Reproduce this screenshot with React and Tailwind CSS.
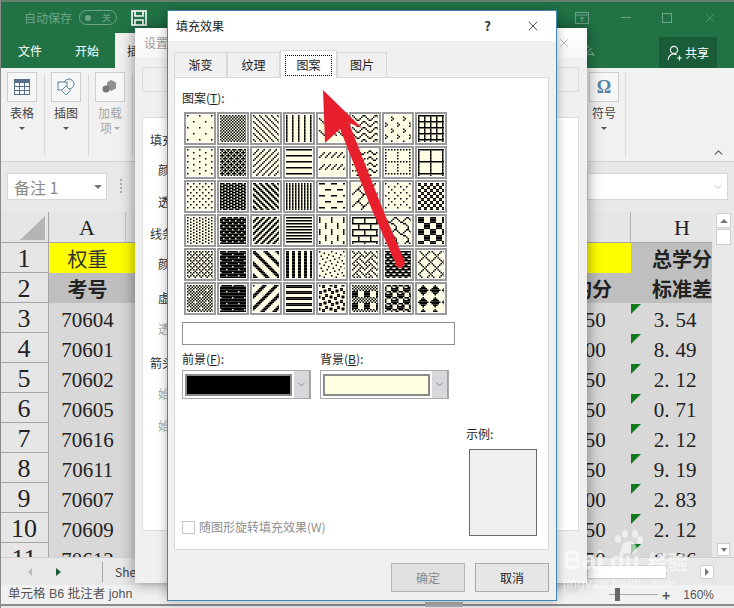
import { ChevronDown, ChevronUp, X } from 'lucide-react'

const CJK = "font-['Noto_Sans_CJK_SC','Liberation_Sans',sans-serif]"
const SERIF = "font-['Liberation_Serif','Noto_Sans_CJK_SC',serif]"

// 48 office fill patterns, 8x8 bitmaps as hex, row by row
const PATTERNS = [
  '8000000008000000', 'AA55AA55AA55AA55', '8844221188442211', '8888888888888888', '0000884422110000', '8142241881422418', '0008040800804080', 'FF888888FF888888',
  '8000080080000800', 'EE55BB55EE55BB55', '1122448811224488', 'FF000000FF000000', '0000112244880000', '0018A4030018A403', 'AA00800080008000', 'FF80808080808080',
  '8800220088002200', 'EEBBEEBBEEBBEEBB', 'CC663399CC663399', 'AAAAAAAAAAAAAAAA', 'F00000000F000000', '0102040818244281', '8000220008002200', 'CCCC3333CCCC3333',
  '8822882288228822', '77FFDDFF77FFDDFF', '3366CC993366CC99', 'FF00FF00FF00FF00', '8080808008080808', 'FF808080FF080808', '038448300C020101', 'F0F0F0F00F0F0F0F',
  'AA44AA11AA44AA11', 'F7FF7FFFF7FF7FFF', 'C1E070381C0E0783', 'CCCCCCCCCCCCCCCC', '8010024004200108', '8854224588142251', 'FF66FF99FF66FF99', '4122140814224180',
  'AA55AA51AA55AA15', '7FFFFFFFF7FFFFFF', '83070E1C3870E0C1', 'FFFF0000FFFF0000', 'B130031BD8C00C8D', 'AA55AA55F0F0F0F0', '77898F8F7798F8F8', '10387CFE7C381000',
]

const SHEET_ROWS = [
  ['70604', '50', '3.54'],
  ['70601', '00', '8.49'],
  ['70602', '50', '2.12'],
  ['70605', '50', '0.71'],
  ['70616', '50', '2.12'],
  ['70611', '50', '9.19'],
  ['70607', '00', '2.83'],
  ['70609', '50', '2.12'],
  ['70612', '50', '6.36'],
]

function Swatch({ bits, id }) {
  const rects = []
  for (let y = 0; y < 8; y++) {
    const row = parseInt(bits.slice(y * 2, y * 2 + 2), 16)
    let x = 0
    while (x < 8) {
      if (row & (0x80 >> x)) {
        let end = x
        while (end < 8 && row & (0x80 >> end)) end++
        rects.push(<rect key={x + '-' + y} x={x} y={y} width={end - x} height="1" fill="#000" />)
        x = end
      } else {
        x++
      }
    }
  }
  return (
    <div className="border-2 border-[#9a9a9a] bg-white p-px">
      <svg width="26" height="27" viewBox="0 0 17.33 18" className="block">
        <defs>
          <pattern id={id} width="8" height="8" patternUnits="userSpaceOnUse">
            <rect width="8" height="8" fill="#fffde4" />
            {rects}
          </pattern>
        </defs>
        <rect width="17.33" height="18" fill={`url(#${id})`} />
      </svg>
    </div>
  )
}

function RibbonButton({ label, muted, children, second }) {
  return (
    <div className="w-[44px] flex flex-col items-center pt-[4px] h-full">
      <div className="w-[30px] h-[30px] border border-[#cfcfcf] bg-[#f7f7f7] flex items-center justify-center">
        {children}
      </div>
      <div className={`mt-[3px] text-[12px] leading-[16px] text-center ${muted ? 'text-[#a6a6a6]' : 'text-[#444]'}`}>
        {label}
      </div>
      <div className="flex items-center gap-[2px] h-[14px]">
        {second && <span className="text-[12px] leading-[14px] text-[#a6a6a6]">{second}</span>}
        <span className={`border-x-[3px] border-t-[3px] border-x-transparent ${muted ? 'border-t-[#aaa]' : 'border-t-[#555]'}`} />
      </div>
    </div>
  )
}

function Combo({ color }) {
  return (
    <div className="w-[129px] h-[29px] border border-[#a8a8a8] bg-white flex items-center pl-[2px]">
      <div className={`w-[107px] h-[22px] border-2 border-[#8a8a8a] ${color}`} />
      <div className="ml-[2px] w-[16px] h-[27px] bg-[#d8d8dc] border-r border-[#a0a0a0] flex items-center justify-center">
        <ChevronDown size={11} strokeWidth={1.2} className="text-[#444]" />
      </div>
    </div>
  )
}

function Hot({ children }) {
  return <span className="underline">{children}</span>
}

function Tab({ label, width, active }) {
  if (active) {
    return (
      <div className={`${width} h-[28px] -mb-px z-10 bg-white border border-b-0 border-[#d9d9d9] flex items-center justify-center pt-px`}>
        <div className="w-[47px] h-[21px] border border-dotted border-black flex items-center justify-center text-[12px] text-[#222]">{label}</div>
      </div>
    )
  }
  return (
    <div className={`${width} h-[25px] border border-b-0 border-[#d9d9d9] flex items-center justify-center text-[12px] text-[#222]`}>{label}</div>
  )
}

function Button({ label, disabled }) {
  return (
    <div className={`w-[74px] h-[29px] border flex items-center justify-center text-[12px] ${disabled ? 'bg-[#e1e1e1] border-[#b4b4b4] text-[#8a8a8a]' : 'bg-[#e6e6e6] border-[#ababab] text-[#222]'}`}>
      {label}
    </div>
  )
}

function BackLabel({ children, indent, muted, h }) {
  return (
    <div className={`text-[12px] whitespace-nowrap ${indent ? 'pl-[15px]' : 'pl-[7px]'} ${muted ? 'text-[#aaa]' : 'text-[#333]'} ${h}`}>
      {children}
    </div>
  )
}

function Sheet() {
  const head = 'bg-[#e6e6e6] border-b border-[#a6a6a6] flex items-center justify-center overflow-hidden'
  const rowNum = `${SERIF} text-[26px] text-[#222] leading-none pt-[3px]`
  const cell = 'flex items-center justify-center overflow-hidden whitespace-nowrap'
  const digits = `${SERIF} text-[21px] text-[#222] bg-[#d9d8d9] pt-[5px]`
  const bold = `${CJK} font-bold text-[20px] text-[#222] pt-[2px]`
  return (
    <div className="w-[712px] h-[345px] overflow-hidden shrink-0">
      <div className="w-[733px] grid grid-cols-[49px_77px_407px_98px_102px] grid-rows-[31px] auto-rows-[30px]">
        {/* column heads */}
        <div className="bg-[#e6e6e6] border-b border-[#a6a6a6] border-r flex items-end justify-end pr-[3px] pb-[2px]">
          <div className="w-[25px] h-[24px] bg-[#b5b5b5] [clip-path:polygon(100%_0,100%_100%,0_100%)]" />
        </div>
        <div className={`${head} border-r border-r-[#c4c4c4] ${SERIF} text-[22px] text-[#222]`}>A</div>
        <div className={head} />
        <div className={`${head} border-r border-r-[#b4b4b4]`} />
        <div className={`${head} ${SERIF} text-[22px] text-[#222]`}>H</div>

        {/* row 1 */}
        <div className={`${head} border-r border-r-[#a6a6a6] ${rowNum}`}>1</div>
        <div className={`${cell} bg-[#ffff00] ${CJK} text-[20px] text-[#333] pt-[2px]`}>权重</div>
        <div className="bg-[#ffff00]" />
        <div className="bg-[#ffff00]" />
        <div className={`${cell} bg-[#bfbfbf] ${bold}`}>总学分</div>

        {/* row 2 */}
        <div className={`${head} border-r border-r-[#a6a6a6] ${rowNum}`}>2</div>
        <div className={`${cell} bg-[#bfbfbf] ${bold}`}>考号</div>
        <div className="bg-[#bfbfbf]" />
        <div className={`${cell} bg-[#bfbfbf] ${bold}`}>平均分</div>
        <div className={`${cell} bg-[#bfbfbf] ${bold}`}>标准差</div>

        {SHEET_ROWS.map((r, i) => (
          <div key={r[0]} className="contents">
            <div className={`${head} border-r border-r-[#a6a6a6] ${rowNum}`}>{i + 3}</div>
            <div className={`${cell} ${digits}`}>{r[0]}</div>
            <div className="bg-[#d9d8d9]" />
            <div className={`${cell} ${digits}`}>85.{r[1]}</div>
            <div className={`${cell} relative ${digits} pr-[14px]`}>
              {r[2].split('.')[0]}<span className="tracking-[6px]">.</span>{r[2].split('.')[1]}
              <span className="absolute left-0 top-px w-[10px] h-[10px] bg-[#0f7b1c] [clip-path:polygon(0_0,100%_0,0_100%)]" />
            </div>
          </div>
        ))}
      </div>
    </div>
  )
}

function BackDialog() {
  return (
    <div className={`absolute left-[135px] top-[28px] w-[452px] h-[555px] bg-[#f0f0f0] shadow-[0_0_14px_rgba(0,0,0,0.45)] flex flex-col ${CJK}`}>
      <div className="h-[30px] bg-gradient-to-b from-white to-[#f6f6f6] flex items-center justify-between pl-[9px] pr-[16px] shrink-0">
        <span className="text-[12px] text-[#9a9a9a]">设置批注格式</span>
        <X size={14} strokeWidth={1} className="text-[#8a8a8a]" />
      </div>
      <div className="mx-[7px] mt-[9px] h-[25px] w-[437px] border border-[#dcdcdc] shrink-0" />
      <div className="mt-[25px] mx-[7px] w-[437px] h-[414px] bg-white border border-[#dcdcdc] pt-[13px]">
        <BackLabel h="h-[30px]">填充</BackLabel>
        <BackLabel h="h-[32px]" indent>颜色</BackLabel>
        <BackLabel h="h-[32px]" indent>透明度</BackLabel>
        <BackLabel h="h-[30px]">线条</BackLabel>
        <BackLabel h="h-[34px]" indent>颜色</BackLabel>
        <BackLabel h="h-[31px]" indent>虚线</BackLabel>
        <BackLabel h="h-[34px]" indent muted>透明度</BackLabel>
        <BackLabel h="h-[31px]">箭头</BackLabel>
        <BackLabel h="h-[32px]" indent muted>始端类型</BackLabel>
        <BackLabel h="h-[30px]" indent muted>始端大小</BackLabel>
      </div>
    </div>
  )
}

function FillDialog() {
  return (
    <div className={`absolute left-[167px] top-[10px] w-[390px] h-[591px] border border-[#3f88b5] bg-[#f0f0f1] flex flex-col shadow-[0_0_10px_rgba(0,0,0,0.3)] ${CJK}`}>
      <div className="h-[30px] bg-white flex items-center justify-between pl-[8px] pr-[15px] shrink-0">
        <span className="text-[12px] text-[#222]">填充效果</span>
        <div className="flex items-center gap-[34px]">
          <span className="text-[13px] font-bold text-[#333]">?</span>
          <X size={16} strokeWidth={1.2} className="text-[#222]" />
        </div>
      </div>

      <div className="flex-1 flex flex-col px-[6px] pt-[9px]">
        <div className="flex items-end">
          <Tab label="渐变" width="w-[53px]" />
          <Tab label="纹理" width="w-[53px]" />
          <Tab label="图案" width="w-[57px]" active />
          <Tab label="图片" width="w-[50px]" />
        </div>

        <div className="w-[375px] h-[473px] bg-white border border-[#d9d9d9] pl-[7px] pr-[11px] pt-[12px] pb-[13px] flex flex-col text-[#222]">
          <div className="text-[12px] leading-[16px]">图案(<Hot>T</Hot>):</div>
          <div className="mt-[6px] ml-[2px] grid grid-cols-[repeat(8,32px)] auto-rows-[33px] gap-x-px gap-y-px">
            {PATTERNS.map((p, i) => <Swatch key={i} bits={p} id={'pat' + i} />)}
          </div>
          <div className="mt-[7px] w-[273px] h-[23px] border border-[#8f8f8f]" />
          <div className="mt-[6px] flex gap-[9px]">
            <div className="w-[129px]">
              <div className="text-[12px] leading-[16px] mb-[3px]">前景(<Hot>F</Hot>):</div>
              <Combo color="bg-black" />
            </div>
            <div className="w-[129px]">
              <div className="text-[12px] leading-[16px] mb-[3px]">背景(<Hot>B</Hot>):</div>
              <Combo color="bg-[#fffee0]" />
            </div>
          </div>
          <div className="flex-1 flex items-end justify-between">
            <div className="flex items-center gap-[4px]">
              <div className="w-[13px] h-[13px] border border-[#c4c4c4]" />
              <span className="text-[12px] text-[#8f8f8f]">随图形旋转填充效果(W)</span>
            </div>
            <div className="w-[71px]">
              <div className="text-[12px] leading-[16px] mb-[7px]">示例:</div>
              <div className="ml-[3px] w-[68px] h-[87px] border border-[#6b6b6b] bg-[#f0eff2]" />
            </div>
          </div>
        </div>

        <div className="flex justify-end gap-[10px] mt-[13px] pr-px">
          <Button label="确定" disabled />
          <Button label="取消" />
        </div>
      </div>
    </div>
  )
}

export default function App() {
  return (
    <div className={`relative w-[734px] h-[608px] overflow-hidden bg-[#e8e8e8] flex flex-col ${CJK}`}>
      {/* title bar + tabs */}
      <div className="h-[68px] shrink-0 bg-[#217346] border-t-2 border-[#66806f] flex flex-col">
        <div className="h-[31px] flex items-center pl-[24px] pr-[17px] text-[#6fa388]">
          <span className="text-[12px]">自动保存</span>
          <div className="ml-[7px] w-[38px] h-[15px] rounded-full border border-[#6fa388] flex items-center justify-between px-[5px]">
            <span className="w-[6px] h-[6px] rounded-full bg-[#6fa388]" />
            <span className="text-[9px] leading-none">关</span>
          </div>
          <svg width="16" height="16" viewBox="0 0 16 16" className="ml-[14px]" fill="none" stroke="#fff" strokeWidth="1.6">
            <rect x="1" y="1" width="14" height="14" />
            <path d="M4 1v5h8V1M4 15v-5h8v5" />
          </svg>
          <div className="flex-1" />
          <svg width="14" height="12" viewBox="0 0 14 12" fill="none" stroke="#6fa388">
            <rect x="0.5" y="0.5" width="13" height="11" />
            <path d="M0.5 3h13M7 10V5M5 7l2-2 2 2" />
          </svg>
          <span className="ml-[32px] w-[10px] h-px bg-[#6fa388]" />
          <span className="ml-[31px] w-[10px] h-[10px] border border-[#6fa388]" />
          <X size={14} strokeWidth={1} className="ml-[31px] text-[#6fa388]" />
        </div>
        <div className="flex-1 flex items-stretch text-[12px] text-white">
          <div className="w-[18px]" />
          <div className="w-[24px] flex items-center">文件</div>
          <div className="w-[33px]" />
          <div className="w-[24px] flex items-center">开始</div>
          <div className="w-[16px]" />
          <div className="w-[300px] bg-[#f1f1f1] text-[#333] flex items-center pl-[12px]">插入</div>
          <div className="flex-1 flex items-center text-[#8fb9a3] text-[12px] whitespace-nowrap pl-[72px]">
            告诉我你想要做什么
          </div>
          <div className="w-[58px] h-[31px] self-end mr-[17px] bg-[#1a5c38] flex items-center justify-center gap-[2px] text-[12px]">
            <svg width="16" height="16" viewBox="0 0 16 16" fill="none" stroke="#fff" strokeWidth="1.1">
              <circle cx="7" cy="5" r="3.6" />
              <path d="M1 15c.5-3.5 2.5-6 6-6 1 0 2 .3 2.6.7M10 13h5M12.5 10.500v5" />
            </svg>
            共享
          </div>
        </div>
      </div>

      {/* ribbon */}
      <div className="h-[94px] shrink-0 bg-[#f1f1f1] border-b border-[#d4d4d4] flex relative">
        <RibbonButton label="表格">
          <svg width="16" height="16" viewBox="0 0 16 16" fill="none" stroke="#56708a" strokeWidth="1">
            <rect x="0.500" y="0.500" width="15" height="15" />
            <rect x="0.500" y="0.500" width="15" height="3" fill="#56708a" />
            <path d="M5.500 3.500v12M10.500 3.500v12M0.500 7.500h15M0.500 11.500h15" />
          </svg>
        </RibbonButton>
        <RibbonButton label="插图">
          <svg width="18" height="18" viewBox="0 0 18 18" fill="none" stroke="#56809f" strokeWidth="1">
            <circle cx="12" cy="6" r="5" fill="#f7f7f7" />
            <rect x="1" y="4" width="9" height="8" fill="#f7f7f7" />
            <path d="M9 8l4.500 4.500L9 17l-4.500-4.500z" fill="#f7f7f7" stroke="#5a8f9a" />
          </svg>
        </RibbonButton>
        <RibbonButton label="加载" second="项" muted>
          <svg width="16" height="16" viewBox="0 0 16 16" fill="#8f8f8f">
            <path d="M9 1l5 2.500v6L9 12l-4-2.500v-6z" />
            <circle cx="4" cy="10" r="3.500" fill="#777" />
          </svg>
        </RibbonButton>
        <span className="absolute left-[44px] top-[6px] bottom-[5px] w-px bg-[#d9d9d9]" />
        <span className="absolute left-[88px] top-[6px] bottom-[5px] w-px bg-[#d9d9d9]" />
        <span className="absolute left-[132px] top-[6px] bottom-[5px] w-px bg-[#d9d9d9]" />
        <div className="flex-1" />
        <RibbonButton label="符号">
          <span className={`${SERIF} font-bold text-[18px] leading-none text-[#5585a8]`}>Ω</span>
        </RibbonButton>
        <div className="w-px my-[4px] ml-[-1px] bg-[#d9d9d9]" />
        <div className="w-[108px] flex items-end justify-end pr-[9px] pb-[2px]">
          <ChevronUp size={13} strokeWidth={2.4} className="text-[#666]" />
        </div>
      </div>

      {/* name box / formula row */}
      <div className="h-[50px] shrink-0 bg-[#e8e8e8] flex pt-[11px] pl-[7px] pr-[6px]">
        <div className="w-[100px] h-[27px] bg-white border border-[#d6d6d6] flex items-center justify-between pl-[6px] pr-[4px]">
          <span className="text-[16px] text-[#8a8a8a]">备注 1</span>
          <span className="border-x-[4px] border-t-[4px] border-x-transparent border-t-[#777]" />
        </div>
        <span className="ml-[13px] mt-[6px] h-[14px] border-l-2 border-dotted border-[#aaa]" />
        <div className="flex-1" />
        <div className="w-[141px] h-[27px] bg-white border border-[#d6d6d6] flex items-center justify-end pr-[3px]">
          <ChevronDown size={12} strokeWidth={2} className="text-[#bbb]" />
        </div>
      </div>

      {/* sheet + vertical scrollbar */}
      <div className="h-[345px] shrink-0 flex w-[734px]">
        <Sheet />
        <div className="flex-1 flex flex-col items-start pl-[4px] pt-px pb-px">
          <div className="w-[15px] h-[15px] bg-white border border-[#cfcfcf] flex items-center justify-center">
            <span className="border-x-[4px] border-b-[4px] border-x-transparent border-b-[#777]" />
          </div>
          <div className="w-[15px] h-[16px] bg-white border border-[#cfcfcf] mt-px" />
          <div className="flex-1" />
          <div className="w-[13px] h-[13px] ml-px bg-white border border-[#cfcfcf] flex items-center justify-center">
            <span className="border-x-[3px] border-t-[4px] border-x-transparent border-t-[#777]" />
          </div>
        </div>
      </div>

      {/* sheet tabs */}
      <div className="h-[28px] shrink-0 bg-[#e8e8e8] flex items-center border-t border-[#d0d0d0]">
        <span className="ml-[28px] border-y-[4px] border-r-[4px] border-y-transparent border-r-[#bbb]" />
        <span className="ml-[24px] border-y-[4px] border-l-[5px] border-y-transparent border-l-[#1a5c38]" />
        <span className="ml-[41px] w-px h-[20px] bg-[#a8a8a8]" />
        <span className="ml-[12px] text-[12px] text-[#444]">Sheet1</span>
        <div className="flex-1" />
        <div className="w-[80px] h-[14px] bg-white border border-[#cfcfcf]" />
        <div className="w-[33px]" />
        <div className="w-[14px] h-[14px] bg-white border border-[#cfcfcf] flex items-center justify-center mr-[20px]">
          <span className="border-y-[4px] border-l-[4px] border-y-transparent border-l-[#777]" />
        </div>
      </div>

      {/* status bar */}
      <div className="h-[21px] shrink-0 bg-[#f1f1f1] flex items-center pl-[8px] pr-[20px] text-[#555] text-[12px] border-b-2 border-[#8a8a8a]">
        <span className="font-['Liberation_Sans','Noto_Sans_CJK_SC',sans-serif] text-[12.5px]">单元格 B6 批注者 john</span>
        <div className="flex-1" />
        <span className="relative w-[49px] h-px bg-[#aaa]">
          <span className="absolute left-[6px] top-[-6px] w-[5px] h-[13px] bg-[#666]" />
        </span>
        <span className="ml-[4px] text-[14px] font-bold leading-none text-[#555]">+</span>
        <span className="ml-[13px] font-['Liberation_Sans',sans-serif] text-[12px]">160%</span>
      </div>

      {/* window frame left edge */}
      <span className="absolute left-0 top-0 bottom-0 w-px bg-[#8a8a8a]" />
      <span className="absolute left-[425px] top-[602px] w-[38px] h-[5px] bg-[#aaaaaa]" />

      <BackDialog />
      <FillDialog />

      {/* red arrow drawn over the dialog */}
      <svg className="absolute left-0 top-0 pointer-events-none" width="734" height="608" viewBox="0 0 734 608">
        <path
          d="M323 90L362 128L349 123L383 210L405 262Q404 268 400 268Q396 268 395 262L372 210L340 129L325 143Z"
          fill="#e8202e"
        />
      </svg>

      {/* baidu watermark */}
      <div className="absolute left-[563px] top-[530px] w-[135px] h-[60px] text-white/60 pointer-events-none">
        <svg className="absolute left-[46px] top-0" width="36" height="24" viewBox="0 0 36 24" fill="currentColor">
          <ellipse cx="9" cy="9" rx="3" ry="4" />
          <ellipse cx="16" cy="4" rx="3" ry="4" />
          <ellipse cx="26" cy="4" rx="3" ry="4" />
          <ellipse cx="31" cy="10" rx="3" ry="4" />
          <path d="M12 20c0-5 4-9 8-9s8 4 8 9c0 3-4 4-8 3-4 1-8 0-8-3z" />
        </svg>
        <span className="absolute left-0 top-[17px] text-[26px] leading-none font-bold font-['Liberation_Sans',sans-serif]">Bai</span>
        <span className="absolute left-[47px] top-[19px] text-[24px] leading-none font-bold font-['Liberation_Sans',sans-serif]">du</span>
        <span className="absolute left-[85px] top-[22px] text-[20px] leading-none font-bold">经验</span>
        <span className="absolute left-0 top-[47px] text-[13px] leading-none tracking-[0.5px] font-['Liberation_Sans',sans-serif]">jingyan.baidu.com</span>
      </div>
    </div>
  )
}
